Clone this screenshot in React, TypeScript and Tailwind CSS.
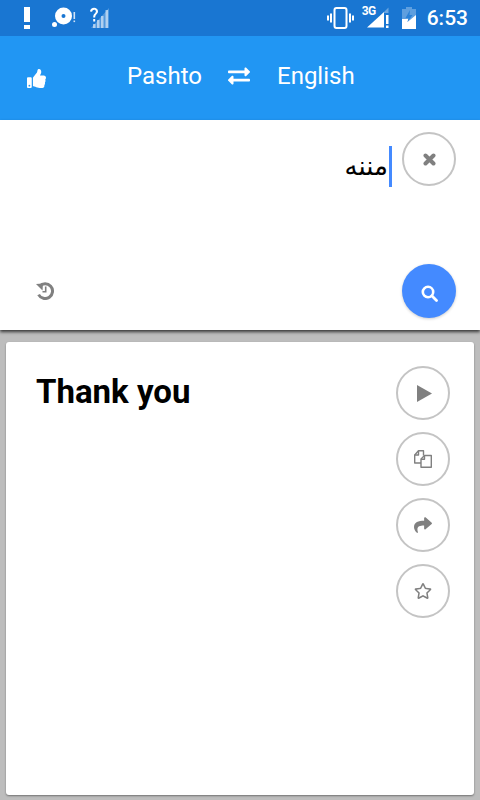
import React from "react";
import { FaShare, FaRegStar, FaExchangeAlt, FaThumbsUp } from "react-icons/fa";

function CircleBtn({ children }: { children: React.ReactNode }) {
  return (
    <div className="flex h-[54px] w-[54px] items-center justify-center rounded-full border-2 border-[#c4c4c4] bg-white text-[#808080]">
      {children}
    </div>
  );
}

function FilesIcon() {
  return (
    <svg width="20" height="20" viewBox="0 0 20 20" fill="none" stroke="#808080" strokeWidth="1.4" strokeLinejoin="round">
      <path d="M8 14H1.7V6L5.5 1.7H10.5V6.5" />
      <path d="M5.5 1.7V6H1.7" />
      <path d="M8 18.3V10L11.5 6.5H18.3V18.3Z" />
      <path d="M11.5 6.5V10.2H8" />
    </svg>
  );
}

export default function App() {
  return (
    <div className="flex h-[800px] w-[480px] flex-col overflow-hidden bg-[#bdbdbd] font-['Roboto',sans-serif]">
      <div className="flex h-9 shrink-0 items-center justify-between bg-[#1976d2] pl-6 pr-3 text-white">
        <div className="flex items-center">
          <svg width="6" height="22" viewBox="0 0 6 22" fill="white">
            <rect x="0" y="0" width="6" height="15" />
            <rect x="0" y="18" width="6" height="4" />
          </svg>
          <svg className="ml-[22px]" width="24" height="22" viewBox="0 0 24 22">
            <circle cx="11.5" cy="9" r="8.5" fill="white" />
            <circle cx="11.5" cy="9" r="2" fill="#1976d2" />
            <circle cx="2.5" cy="17.5" r="2.5" fill="white" />
            <rect x="21.5" y="5" width="1.6" height="7" fill="white" opacity="0.8" />
            <rect x="21.5" y="13.5" width="1.6" height="1.6" fill="white" opacity="0.8" />
          </svg>
          <svg className="ml-[14px]" width="20" height="22" viewBox="0 0 20 22" fill="white">
            <path d="M1 21L19 1V21Z" opacity="0.25" />
            <rect x="3" y="17" width="2.5" height="4" opacity="0.55" />
            <rect x="7" y="13" width="2.5" height="8" opacity="0.55" />
            <rect x="11" y="9" width="2.5" height="12" opacity="0.55" />
            <rect x="15.5" y="3" width="2.5" height="18" opacity="0.55" />
            <path d="M0 4.5C0 -0.5 8 -0.5 8 4.2C8 7 5.2 7.2 5.2 10.5H3.2C3.2 6.5 5.9 6.5 5.9 4.3C5.9 2 2.2 2.2 2.1 4.8Z" />
            <rect x="3.2" y="12" width="2" height="2.5" />
          </svg>
        </div>
        <div className="flex items-center">
          <svg width="27" height="22" viewBox="0 0 27 22" fill="none" stroke="white">
            <rect x="7.5" y="1" width="12" height="20" rx="2" strokeWidth="2" />
            <path d="M4 6.5V15.5M1 8.5V13.5M23 6.5V15.5M26 8.5V13.5" strokeWidth="2" />
          </svg>
          <div className="relative ml-[8px] h-[22px] w-[27px]">
            <svg width="27" height="22" viewBox="0 0 27 22" fill="white" className="absolute left-0 top-0">
              <path d="M5 20.5L22 5V20.5Z" />
              <path d="M22 5L26.5 0.5V6H22Z" opacity="0.35" />
              <rect x="24" y="8" width="2.5" height="9" />
              <rect x="24" y="18.5" width="2.5" height="2.5" />
            </svg>
            <span className="absolute left-0 top-[-2px] text-[12px] font-bold leading-[12px] tracking-[-0.5px]">3G</span>
          </div>
          <svg className="ml-[13px]" width="14" height="22" viewBox="0 0 14 22" fill="white">
            <path d="M4 0H10V2H14V22H0V2H4Z" opacity="0.3" />
            <path d="M0 12H6.5L5.5 15L14 8V22H0Z" />
            <path d="M8 3L3.5 11H6.5L5.5 15L10.5 8H7.5Z" fill="#2a82d8" />
          </svg>
          <span className="ml-[11px] text-[21px] font-medium leading-none">6:53</span>
        </div>
      </div>

      <div className="flex h-[84px] shrink-0 items-center bg-[#2196f3] pb-1 text-white">
        <div className="ml-[27px] mt-1 w-[100px]">
          <FaThumbsUp size={19} />
        </div>
        <span className="w-[73px] text-2xl leading-none">Pashto</span>
        <FaExchangeAlt size={22} className="ml-7" />
        <span className="ml-[27px] text-2xl leading-none">English</span>
      </div>

      <div className="flex h-[210px] shrink-0 flex-col justify-between bg-white pb-3 pl-9 pr-6 pt-3 shadow-[0_2px_3px_rgba(0,0,0,0.7)]">
        <div className="flex items-start justify-end">
          <div className="mt-[14px] flex items-center">
            <span dir="rtl" className="text-[26px] leading-[41px] text-black font-['DejaVu_Sans','Noto_Sans',sans-serif]">مننه</span>
            <div className="ml-px h-[41px] w-[3px] bg-[#448aff]" />
          </div>
          <div className="ml-2.5">
            <CircleBtn>
              <svg width="13" height="13" viewBox="0 0 13 13" stroke="#808080" strokeWidth="4" strokeLinecap="round">
                <path d="M2.5 2.5L10.5 10.5M10.5 2.5L2.5 10.5" />
              </svg>
            </CircleBtn>
          </div>
        </div>
        <div className="flex items-center justify-between">
          <svg width="18" height="18" viewBox="0 0 18 18" fill="none">
            <path d="M3.6 4.2A7.4 7.4 0 1 1 2.6 12.6" stroke="#808080" strokeWidth="3" />
            <path d="M0 2L7 1.5L6.5 8.5Z" fill="#808080" />
            <path d="M9.7 4.5V9.7H6.5" stroke="#808080" strokeWidth="1.6" />
          </svg>
          <div className="flex h-[54px] w-[54px] items-center justify-center rounded-full bg-[#448aff] shadow-[0_1px_3px_rgba(0,0,0,0.2)]">
            <svg width="17" height="17" viewBox="0 0 17 17" fill="none" stroke="white" className="mt-1">
              <circle cx="7" cy="7" r="5.2" strokeWidth="2.6" />
              <path d="M10.8 10.8L15.5 15.5" strokeWidth="2.8" strokeLinecap="round" />
            </svg>
          </div>
        </div>
      </div>

      <div className="mx-1.5 mb-[5px] mt-3 flex min-h-0 flex-1 justify-between rounded-[3px] bg-white pl-[30px] pr-6 pt-6 shadow-[0_1px_2px_rgba(0,0,0,0.4)]">
        <div className="text-[33px] font-bold leading-[52px] text-black">Thank you</div>
        <div className="flex flex-col gap-3">
          <CircleBtn>
            <svg width="15" height="17" viewBox="0 0 15 17" fill="#808080" className="ml-0.5">
              <path d="M0 0L15 8.5L0 17Z" />
            </svg>
          </CircleBtn>
          <CircleBtn><FilesIcon /></CircleBtn>
          <CircleBtn><FaShare size={18} /></CircleBtn>
          <CircleBtn><FaRegStar size={18} /></CircleBtn>
        </div>
      </div>
    </div>
  );
}
